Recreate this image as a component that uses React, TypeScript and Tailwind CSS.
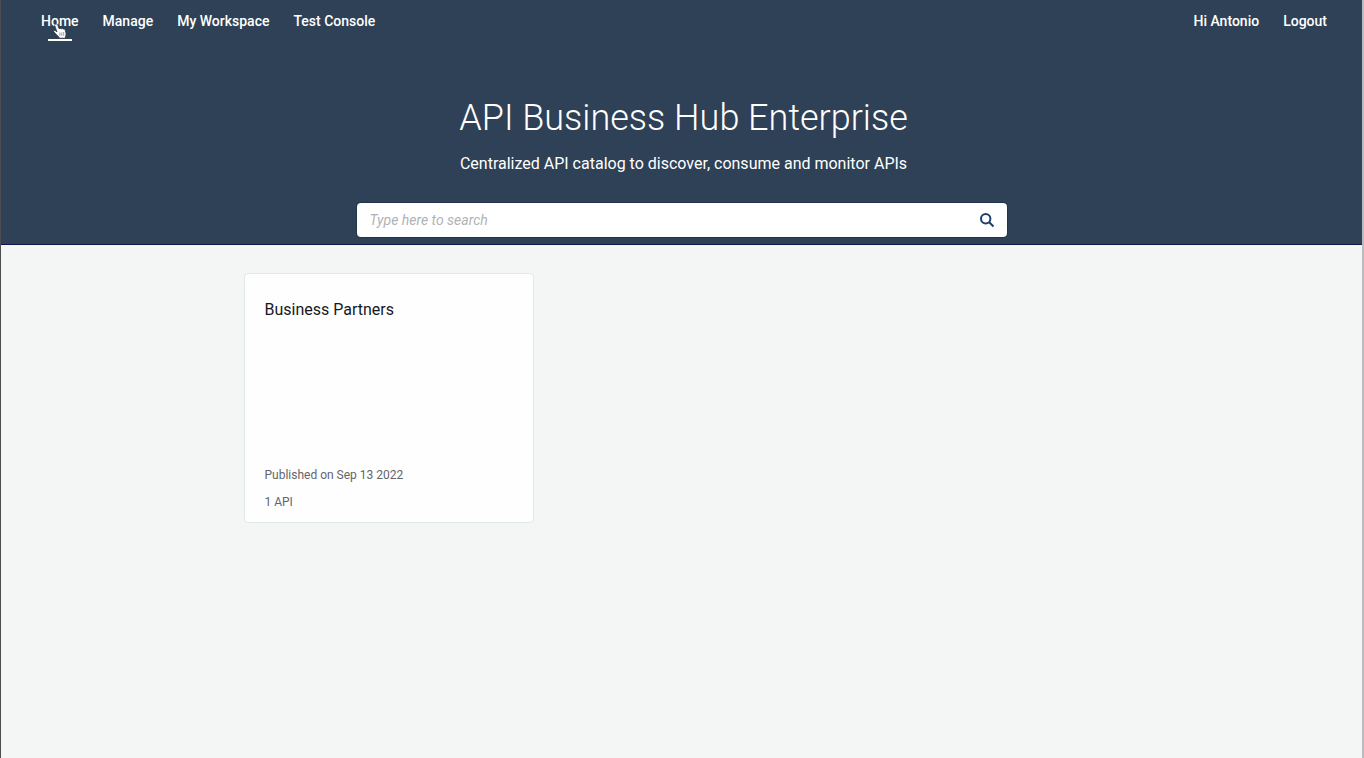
import React from "react";

const leftLinks = ["Home", "Manage", "My Workspace", "Test Console"];

function HandCursor() {
  return (
    <svg
      className="pointer-events-none absolute left-3 top-3"
      width="14"
      height="17"
      viewBox="0 0 14 17"
      aria-hidden="true"
    >
      <path
        d="M2.600 1.200c.9-.5 1.800 0 2.100.8l1.600 4c.3-.7 1.600-.8 2-.1.5-.6 1.600-.5 2 .2.700-.4 1.700-.1 1.900.8l.8 3.100c.3 1.300 0 2.300-.4 3.300l-.3 1.900H6.300l-.5-1.300c-1.200-.8-2.400-2-3.300-3.300L.8 8.900c-.5-.9.500-1.800 1.400-1.300l1.700 1.200L1.800 2.900c-.3-.700.1-1.400.8-1.700Z"
        fill="#fff"
        stroke="#26323f"
        strokeWidth=".8"
        strokeLinejoin="round"
      />
      <path d="M6.900 9.500v3.300M8.800 9.300v3.500M10.700 9v3.800" stroke="#7b858f" strokeWidth=".8" />
    </svg>
  );
}

function Navigation() {
  return (
    <nav className="flex h-11 items-start justify-between pl-10 pr-[35px] pt-[11px] text-sm font-medium text-white">
      <ul className="flex gap-6">
        {leftLinks.map((label) => (
          <li key={label} className="relative">
            <a
              href="#"
              className={
                label === "Home"
                  ? "flex flex-col items-center gap-2 leading-5"
                  : "leading-5"
              }
            >
              {label}
              {label === "Home" && <span className="h-0.5 w-6 bg-white" />}
            </a>
            {label === "Home" && <HandCursor />}
          </li>
        ))}
      </ul>
      <ul className="flex gap-6">
        <li>
          <a href="#">Hi Antonio</a>
        </li>
        <li>
          <a href="#">Logout</a>
        </li>
      </ul>
    </nav>
  );
}

function SearchBox() {
  return (
    <form
      role="search"
      onSubmit={(e) => e.preventDefault()}
      className="mx-auto mt-[27px] flex h-[34px] w-full max-w-[650px] items-center rounded bg-white ring-1 ring-[#22344a]"
    >
      <input
        type="text"
        aria-label="Search"
        placeholder="Type here to search"
        className="h-full min-w-0 flex-1 bg-transparent px-[13px] text-sm text-gray-800 outline-none placeholder:italic placeholder:text-[#b0b2b6]"
      />
      <button type="submit" aria-label="Search" className="flex h-full w-10 items-center justify-center">
        <svg width="16" height="16" viewBox="0 0 16 16" fill="none" stroke="#1c4069" strokeWidth="2">
          <circle cx="6.700" cy="6.700" r="4.700" />
          <path d="M10.200 10.200l4.300 4.300" />
        </svg>
      </button>
    </form>
  );
}

export default function App() {
  return (
    <div className="flex min-h-screen flex-col border-l border-r-2 border-l-[#4b4d50] border-r-[#b9bbbd] bg-[#f4f5f5] font-['Roboto','Liberation_Sans',sans-serif]">
      <header className="border-b border-[#12134f] bg-[#2e4156] pb-[7px]">
        <Navigation />
        <div className="pl-1 pt-12 text-center text-white">
          <h1 className="text-4xl leading-[52px] font-light">API Business Hub Enterprise</h1>
          <p className="mt-2 text-base leading-6">
            Centralized API catalog to discover, consume and monitor APIs
          </p>
        </div>
        <SearchBox />
      </header>
      <main className="mx-auto w-full max-w-[876px] pt-7">
        <a
          href="#"
          className="flex h-[250px] w-[290px] flex-col rounded border border-[#e4e7ea] bg-[#fefefe] px-5 pb-2.5 pt-6"
        >
          <h2 className="text-base leading-6 text-[#16181d]">Business Partners</h2>
          <div className="mt-auto flex flex-col gap-[7px] text-xs leading-5 text-[#62656c]">
            <p>Published on Sep 13 2022</p>
            <p>1 API</p>
          </div>
        </a>
      </main>
    </div>
  );
}
